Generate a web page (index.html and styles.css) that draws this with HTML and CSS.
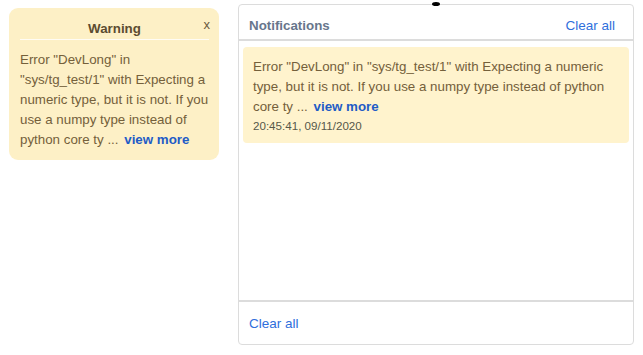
FILE: index.html
```html
<!DOCTYPE html>
<html lang="en">
<head>
  <meta charset="UTF-8" />
  <title>Notifications</title>
  <link rel="stylesheet" href="styles.css">
</head>
<body>
  <div class="page">
    <!-- Toast -->
    <div class="toast">
      <span class="toast-close">x</span>
      <div class="toast-title">Warning</div>
      <div class="toast-body">
        Error "DevLong" in "sys/tg_test/1" with Expecting a numeric type, but it is not. If you use a numpy type instead of python core ty ... <a href="#" class="more">view more</a>
      </div>
    </div>

    <!-- Notifications panel -->
    <div class="panel">
      <span class="caret"></span>
      <div class="panel-head">
        <span class="panel-title">Notifications</span>
        <a href="#" class="link">Clear all</a>
      </div>
      <div class="panel-list">
        <div class="note">
          <div class="note-text">
            Error "DevLong" in "sys/tg_test/1" with Expecting a numeric type, but it is not. If you use a numpy type instead of python core ty ... <a href="#" class="more">view more</a>
          </div>
          <div class="note-time">20:45:41, 09/11/2020</div>
        </div>
      </div>
      <div class="panel-foot">
        <a href="#" class="link">Clear all</a>
      </div>
    </div>
  </div>
</body>
</html>
```

FILE: styles.css
```css
:root {
  --warn-bg: #fff3cd;
  --warn-text: #74603b;
  --link: #2f6fdc;
  --border: #dcdcdc;
}

* {
  box-sizing: border-box;
}

body {
  margin: 0;
  background: #fff;
  font-family: 'Liberation Sans', Arial, sans-serif;
  font-size: 13.33px;
  color: var(--warn-text);
}

a {
  text-decoration: none;
}

.page {
  display: flex;
  align-items: flex-start;
  padding: 4px 0 0 9px;
}

.toast {
  position: relative;
  width: 210px;
  margin-top: 4px;
  padding: 11px 10px 10px 11px;
  background: #fdf0c6;
  border-radius: 9px;
}

.toast-close {
  position: absolute;
  top: 9px;
  right: 9px;
  font-size: 13px;
  color: #6a5a3e;
}

.toast-title {
  text-align: center;
  font-weight: bold;
  line-height: 20px;
  color: #5c4c30;
  border-bottom: 1px solid rgba(255, 255, 255, 0.8);
}

.toast-body {
  margin-top: 10px;
  line-height: 20px;
}

.more {
  color: #1f5cc6;
  font-weight: bold;
  margin-left: 2px;
}

.panel {
  position: relative;
  width: 396px;
  height: 341px;
  margin-left: 19px;
  border: 1px solid var(--border);
  border-radius: 4px;
  display: flex;
  flex-direction: column;
}

.caret {
  position: absolute;
  top: -3px;
  left: 193px;
  width: 8px;
  height: 4px;
  background: #000;
  border-radius: 50%;
}

.panel-head {
  display: flex;
  justify-content: space-between;
  align-items: center;
  padding: 11px 18px 3px 10px;
  line-height: 20px;
  border-bottom: 2px solid var(--border);
}

.panel-title {
  font-weight: bold;
  color: #67768c;
}

.link {
  color: var(--link);
  font-size: 13.5px;
}

.panel-list {
  flex: 1;
  padding: 6px 4px;
}

.note {
  background: var(--warn-bg);
  border-radius: 4px;
  padding: 10px 10px 8px 10px;
}

.note-text {
  line-height: 20px;
}

.note-time {
  font-size: 11.6px;
  line-height: 18px;
  color: #56584a;
}

.panel-foot {
  border-top: 2px solid var(--border);
  padding: 11px 10px 10px;
  line-height: 21px;
}
```
